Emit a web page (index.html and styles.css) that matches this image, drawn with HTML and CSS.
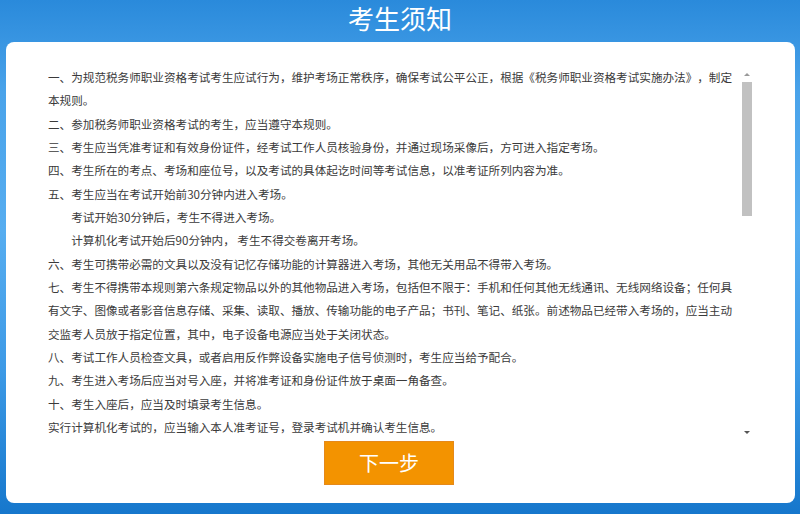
FILE: index.html
```html
<!DOCTYPE html>
<html lang="zh-CN">
<head>
    <meta charset="UTF-8">
    <meta name="viewport" content="width=device-width, initial-scale=1.0">
    <title>考生须知</title>
    <link rel="stylesheet" href="styles.css">
</head>
<body>
    <div class="page">
        <h1 class="title">考生须知</h1>
        <div class="card">
            <div class="notice-box">
                <div class="notice">
                    <p>一、为规范税务师职业资格考试考生应试行为，维护考场正常秩序，确保考试公平公正，根据《税务师职业资格考试实施办法》，制定本规则。</p>
                    <p>二、参加税务师职业资格考试的考生，应当遵守本规则。</p>
                    <p>三、考生应当凭准考证和有效身份证件，经考试工作人员核验身份，并通过现场采像后，方可进入指定考场。</p>
                    <p>四、考生所在的考点、考场和座位号，以及考试的具体起讫时间等考试信息，以准考证所列内容为准。</p>
                    <p>五、考生应当在考试开始前30分钟内进入考场。</p>
                    <p class="indent">考试开始30分钟后，考生不得进入考场。</p>
                    <p class="indent">计算机化考试开始后90分钟内， 考生不得交卷离开考场。</p>
                    <p>六、考生可携带必需的文具以及没有记忆存储功能的计算器进入考场，其他无关用品不得带入考场。</p>
                    <p>七、考生不得携带本规则第六条规定物品以外的其他物品进入考场，包括但不限于：手机和任何其他无线通讯、无线网络设备；任何具有文字、图像或者影音信息存储、采集、读取、播放、传输功能的电子产品；书刊、笔记、纸张。前述物品已经带入考场的，应当主动交监考人员放于指定位置，其中，电子设备电源应当处于关闭状态。</p>
                    <p>八、考试工作人员检查文具，或者启用反作弊设备实施电子信号侦测时，考生应当给予配合。</p>
                    <p>九、考生进入考场后应当对号入座，并将准考证和身份证件放于桌面一角备查。</p>
                    <p>十、考生入座后，应当及时填录考生信息。</p>
                    <p>实行计算机化考试的，应当输入本人准考证号，登录考试机并确认考生信息。</p>
                </div>
                <div class="scrollbar">
                    <div class="scroll-btn"><span class="arrow-up"></span></div>
                    <div class="scroll-track"><div class="scroll-thumb"></div></div>
                    <div class="scroll-btn"><span class="arrow-down"></span></div>
                </div>
            </div>
            <div class="actions">
                <button class="next-btn">下一步</button>
            </div>
        </div>
    </div>
</body>
</html>
```

FILE: styles.css
```css
html, body {
    margin: 0;
    padding: 0;
    height: 514px;
    overflow: hidden;
}
body {
    font-family: "Noto Sans CJK SC", "Microsoft YaHei", sans-serif;
    background: linear-gradient(to bottom, #2a8adb 0%, #4aa3ea 18%, #56adf0 45%, #3d9ae6 72%, #1677cc 100%);
}
.page {
    height: 514px;
}
.title {
    margin: 0;
    height: 42px;
    line-height: 36px;
    text-align: center;
    color: #fff;
    font-size: 26px;
    font-weight: normal;
}
.card {
    background-color: #fff;
    border-radius: 8px;
    margin: 0 5px 0 6px;
    height: 461px;
    padding-top: 24px;
    box-sizing: border-box;
}
.notice-box {
    display: flex;
    margin-left: 42px;
    width: 704px;
    height: 374px;
}
.notice {
    flex: 1;
    overflow: hidden;
    padding-right: 4px;
    color: #3a3a3a;
    font-size: 11.6px;
    line-height: 23.35px;
    text-spacing-trim: space-all;
}
.notice p {
    margin: 0;
}
.notice .indent {
    text-indent: 2em;
}
.scrollbar {
    width: 10px;
    display: flex;
    flex-direction: column;
}
.scroll-btn {
    height: 16px;
    display: flex;
    align-items: center;
    justify-content: center;
}
.arrow-up {
    border-left: 3px solid transparent;
    border-right: 3px solid transparent;
    border-bottom: 3px solid #9a9a9a;
}
.arrow-down {
    border-left: 3px solid transparent;
    border-right: 3px solid transparent;
    border-top: 3px solid #555;
}
.scroll-track {
    flex: 1;
}
.scroll-thumb {
    height: 134px;
    background-color: #c1c1c1;
}
.actions {
    margin-top: 1px;
    padding-left: 318px;
}
.next-btn {
    width: 130px;
    height: 44px;
    background-color: #f39300;
    border: 1px solid #e5891a;
    color: #fff;
    font-family: inherit;
    font-size: 20px;
    line-height: 42px;
    cursor: pointer;
    padding: 0;
}
```
